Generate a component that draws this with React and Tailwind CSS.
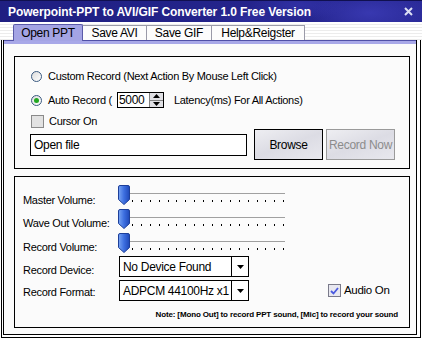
import React from "react";

function Slider() {
  const ticks = [];
  for (let i = 0; i < 19; i++) ticks.push(5 + i * 8.9);
  return (
    <svg width="170" height="21" viewBox="0 0 170 21" className="block">
      <defs>
        <linearGradient id="thumbg" x1="0" x2="1" y1="0" y2="0">
          <stop offset="0" stopColor="#7aa6f4" />
          <stop offset="0.5" stopColor="#3d6fe0" />
          <stop offset="1" stopColor="#1f48b8" />
        </linearGradient>
      </defs>
      <line x1="12" y1="8.5" x2="167" y2="8.5" stroke="#a0a0a0" strokeWidth="1" />
      {ticks.map((x, i) => (
        <rect key={i} x={Math.round(x)} y="15" width="1" height="2" fill="#000" />
      ))}
      <path
        d="M2 0.5 H10 Q11.5 0.5 11.5 2 V14.5 L6 19.5 L0.5 14.5 V2 Q0.5 0.5 2 0.5 Z"
        fill="url(#thumbg)"
        stroke="#1d3f9a"
        strokeWidth="1"
      />
    </svg>
  );
}

function Dropdown({ text }) {
  return (
    <div className="w-[130px] h-[21px] border border-black bg-white flex items-stretch">
      <div className="flex-1 flex items-center pl-[3px] text-[12px]">{text}</div>
      <div className="w-[17px] border-l border-black flex items-center justify-center">
        <svg width="7" height="4" viewBox="0 0 7 4">
          <path d="M0 0 H7 L3.5 4 Z" fill="#000" />
        </svg>
      </div>
    </div>
  );
}

function Radio({ checked }) {
  return (
    <div className="w-[11px] h-[11px] rounded-full border border-[#3a5a80] bg-[linear-gradient(135deg,#dcdcdc,#ffffff)] flex items-center justify-center">
      {checked && <div className="w-[5px] h-[5px] rounded-full bg-[#22a822]" />}
    </div>
  );
}

export default function App() {
  return (
    <div className="w-[422px] h-[338px] bg-white flex flex-col overflow-hidden font-['Liberation_Sans',Arial,sans-serif] text-[11px] tracking-[-0.3px] text-black">
      {/* Title bar */}
      <div className="h-[22px] shrink-0 flex items-center justify-between pl-[8px] pr-[9px] border-t border-[#101050] bg-[radial-gradient(ellipse_60px_22px_at_370px_12px,#3838b0,transparent),radial-gradient(ellipse_50px_14px_at_300px_4px,#3030a4,transparent),radial-gradient(ellipse_40px_12px_at_250px_18px,#2c2c9c,transparent),linear-gradient(90deg,#1f1f82,#24248c_60%,#2a2a98)]">
        <span className="text-white font-bold text-[12px] tracking-[-0.1px]">
          Powerpoint-PPT to AVI/GIF Converter 1.0 Free Version
        </span>
        <svg width="9" height="9" viewBox="0 0 9 9">
          <path d="M1 1 L8 8 M8 1 L1 8" stroke="#dce0f4" strokeWidth="2" />
        </svg>
      </div>

      {/* Tabs strip */}
      <div className="h-[18px] shrink-0 flex items-end pl-[13px] bg-[repeating-linear-gradient(to_bottom,#ffffff_0px,#ffffff_2px,#ececec_2px,#ececec_3px)]">
        <div className="relative z-10 -mb-px w-[70px] h-[17px] flex items-center justify-center bg-[#a4a4e4] border border-b-0 border-[#5a5aa8] rounded-t-[2px] text-[12px]">
          Open PPT
        </div>
        <div className="w-[64px] h-[15px] flex items-center justify-center bg-[#fcfcfc] border-t border-r border-[#9a9aa8] text-[12px]">
          Save AVI
        </div>
        <div className="w-[65px] h-[15px] flex items-center justify-center bg-[#fcfcfc] border-t border-r border-[#9a9aa8] text-[12px]">
          Save GIF
        </div>
        <div className="w-[93px] h-[15px] flex items-center justify-center bg-[#fcfcfc] border-t border-r border-[#9a9aa8] text-[12px]">
          Help&amp;Reigster
        </div>
      </div>

      {/* Body */}
      <div className="flex-1 flex flex-col px-px">
        <div className="flex-1 flex flex-col border-x border-b border-black pl-px pr-[3px] pb-[2px]">
          <div className="flex-1 flex flex-col border-x border-b border-black">
            <div className="h-[4px] shrink-0 border-t border-[#5050a8] bg-[#a8a8e8]" />
            <div className="flex-1 flex flex-col bg-[#fbfbfb] pl-[10px] pr-[6px]">
              {/* Group 1 */}
              <div className="mt-[12px] h-[113px] border border-black flex flex-col pl-[15px] pt-[11px]">
                <div className="h-[16px] flex items-center gap-[6px] pl-px">
                  <Radio />
                  <span>Custom Record (Next Action By Mouse Left Click)</span>
                </div>
                <div className="mt-[8px] h-[16px] flex items-center pl-px">
                  <Radio checked />
                  <span className="ml-[6px]">Auto Record (</span>
                  <div className="ml-[5px] h-[16px] flex border border-black bg-white">
                    <div className="w-[31px] flex items-center pl-[1px] text-[12px]">5000</div>
                    <div className="w-[14px] border-l border-[#808080] bg-[#e0e0e4] flex flex-col">
                      <div className="flex-1 flex items-center justify-center border-b border-[#808080]">
                        <svg width="7" height="4" viewBox="0 0 7 4"><path d="M3.5 0 L7 4 H0 Z" fill="#000" /></svg>
                      </div>
                      <div className="flex-1 flex items-center justify-center">
                        <svg width="7" height="4" viewBox="0 0 7 4"><path d="M0 0 H7 L3.5 4 Z" fill="#000" /></svg>
                      </div>
                    </div>
                  </div>
                  <span className="ml-[10px]">Latency(ms) For All Actions)</span>
                </div>
                <div className="mt-[5px] h-[16px] flex items-center gap-[5px] pl-px">
                  <div className="w-[13px] h-[13px] border border-[#8a8a8a] bg-[#e2e2e2]" />
                  <span>Cursor On</span>
                </div>
                <div className="h-[31px] flex items-center">
                  <div className="w-[217px] h-[22px] border border-black bg-white flex items-center pl-[3px] text-[12px]">
                    Open file
                  </div>
                  <div className="ml-[7px] w-[69px] h-[31px] border border-black bg-[linear-gradient(160deg,#eeeef2,#dcdce4_50%,#e8e8ee)] flex items-center justify-center text-[12px]">
                    Browse
                  </div>
                  <div className="ml-[3px] w-[69px] h-[31px] border border-[#9a9a9a] bg-[linear-gradient(160deg,#eeeef2,#dcdce4_50%,#e8e8ee)] flex items-center justify-center text-[12px] text-[#8c8c8c]">
                    Record Now
                  </div>
                </div>
              </div>

              {/* Group 2 */}
              <div className="mt-[7px] h-[152px] border border-black flex flex-col pl-[8px] pt-[8px]">
                <div className="h-[24px] flex items-start">
                  <span className="w-[95px] mt-[8px] leading-[14px]">Master Volume:</span>
                  <Slider />
                </div>
                <div className="h-[24px] flex items-start">
                  <span className="w-[95px] mt-[7px] leading-[14px]">Wave Out Volume:</span>
                  <Slider />
                </div>
                <div className="h-[23px] flex items-start">
                  <span className="w-[95px] mt-[7px] leading-[14px]">Record Volume:</span>
                  <Slider />
                </div>
                <div className="h-[21px] flex items-center">
                  <span className="w-[96px] mt-[7px] leading-[14px]">Record Device:</span>
                  <Dropdown text="No Device Found" />
                </div>
                <div className="mt-[3px] h-[21px] flex items-center">
                  <span className="w-[96px] mt-[2px] leading-[14px]">Record Format:</span>
                  <Dropdown text="ADPCM 44100Hz x1" />
                  <div className="ml-[79px] flex items-center gap-[3px]">
                    <div className="w-[13px] h-[13px] border border-[#7a7a8a] bg-[#e8e8f0] flex items-center justify-center">
                      <svg width="9" height="8" viewBox="0 0 9 8">
                        <path d="M1 4 L3.5 6.5 L8 1" stroke="#4a5ae0" strokeWidth="1.8" fill="none" />
                      </svg>
                    </div>
                    <span className="text-[11.5px]">Audio On</span>
                  </div>
                </div>
                <div className="mt-[8px] flex justify-end pr-[11px] text-[8px] tracking-[-0.15px] font-semibold">
                  Note: [Mono Out] to record PPT sound, [Mic] to record your sound
                </div>
              </div>
            </div>
          </div>
        </div>
      </div>
    </div>
  );
}
